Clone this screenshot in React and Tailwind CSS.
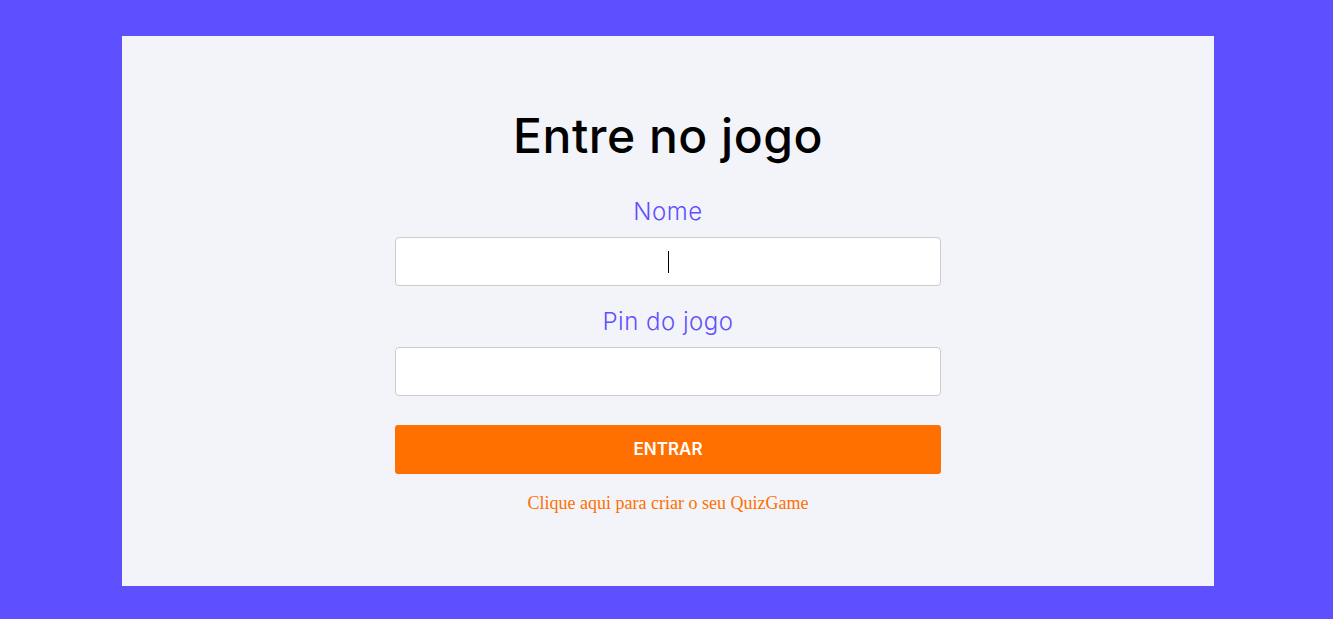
export default function App() {
  return (
    <div className="min-h-[619px] bg-[#5f50ff] pt-[36px] pb-[33px]">
      <div className="ml-[122px] w-[1092px] h-[550px] bg-[#f3f4f9] flex flex-col items-center pt-[72px] font-['Inter','Lato',sans-serif]">
        <h1 className="text-[48px] leading-[56px] font-medium text-black tracking-[0.5px]">Entre no jogo</h1>

        <label className="mt-[33px] text-[24px] leading-[30px] font-light tracking-[0.5px] text-[#5f50ff]">Nome</label>
        <div className="relative mt-[10px] w-[546px] h-[49px] rounded-[4px] border border-[#cccccc] bg-white">
          <input className="w-full h-full bg-transparent text-center outline-none" />
          <span className="absolute left-[272px] top-[13px] w-px h-[22px] bg-black" />
        </div>

        <label className="mt-[21px] text-[24px] leading-[30px] font-light tracking-[0.5px] text-[#5f50ff]">Pin do jogo</label>
        <div className="mt-[10px] w-[546px] h-[49px] rounded-[4px] border border-[#cccccc] bg-white">
          <input className="w-full h-full bg-transparent text-center outline-none" />
        </div>

        <button className="mt-[29px] w-[546px] h-[49px] rounded-[3px] bg-[#ff7000] text-white text-[17px] font-semibold">
          ENTRAR
        </button>

        <a href="#" className="mt-[16px] text-[18px] text-[#ff7000] font-['Liberation_Serif',serif]">
          Clique aqui para criar o seu QuizGame
        </a>
      </div>
    </div>
  )
}
